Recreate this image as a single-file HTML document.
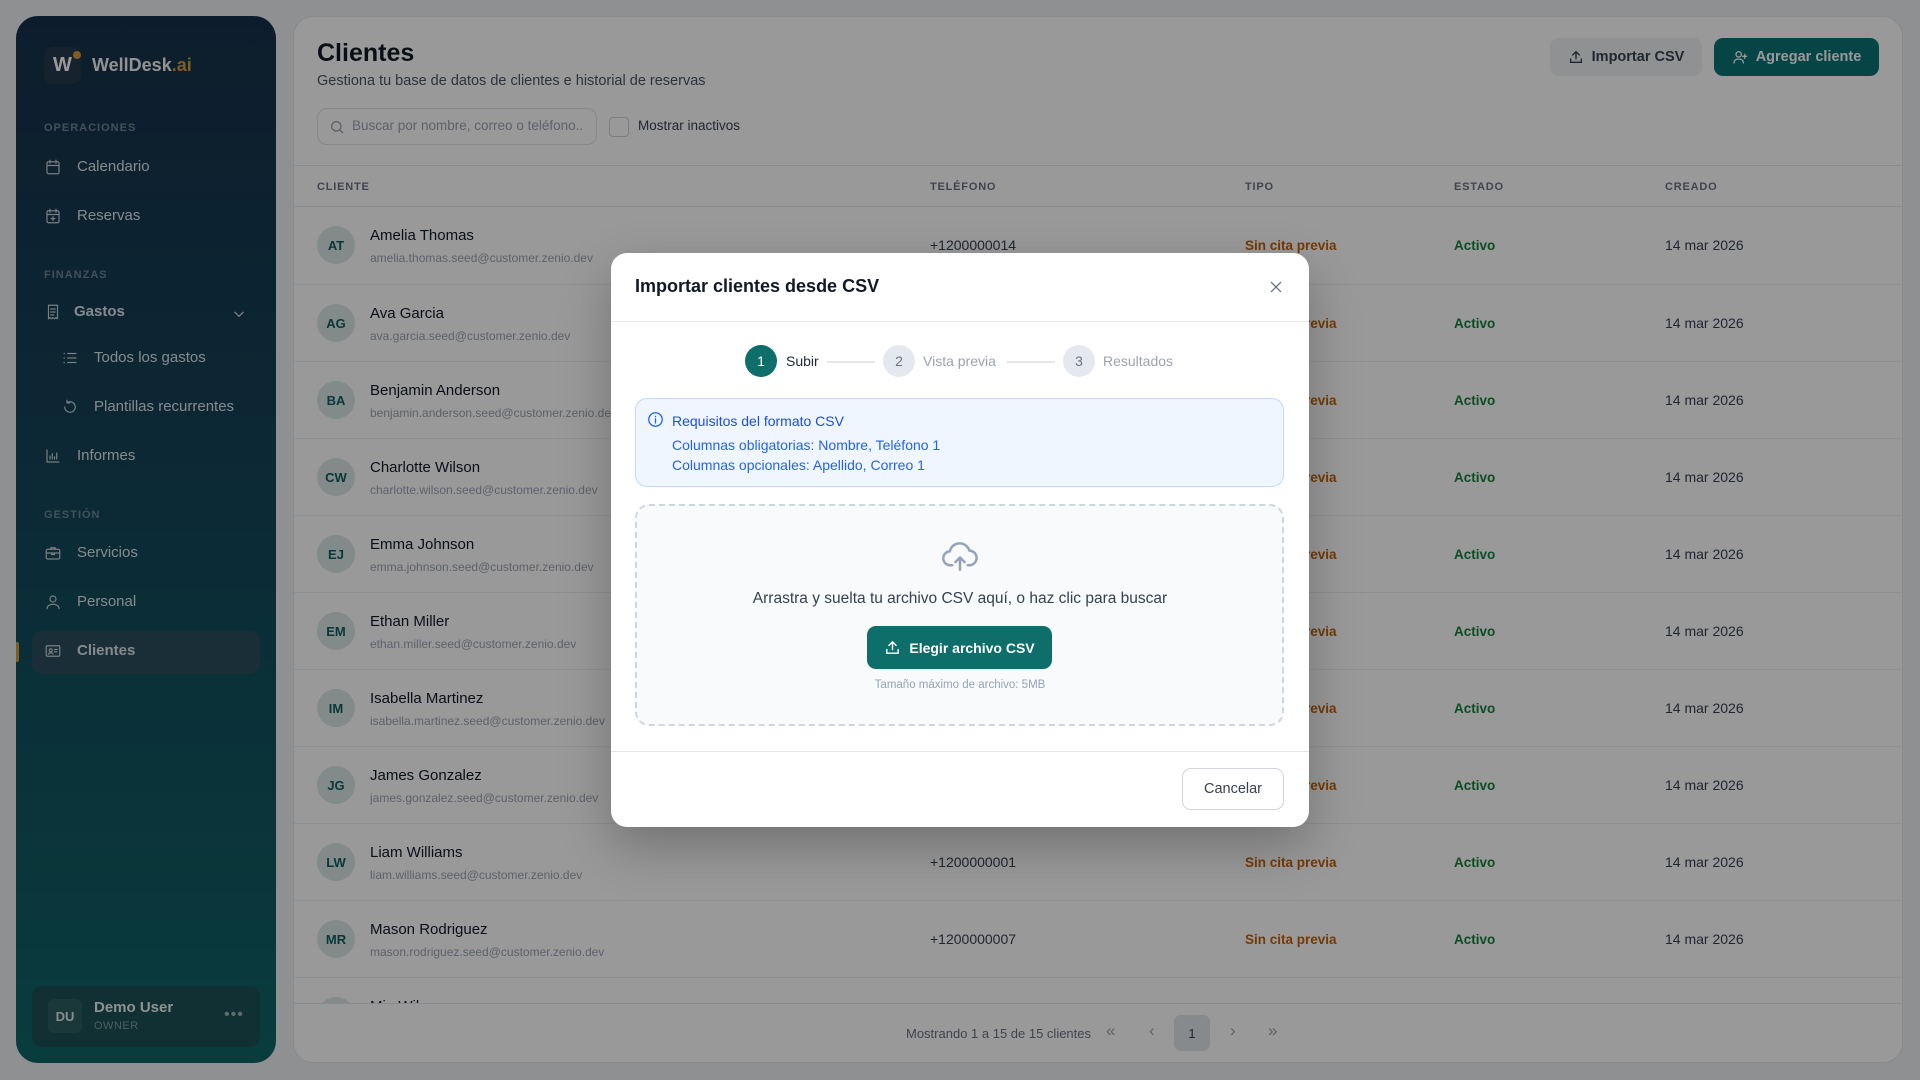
<!DOCTYPE html>
<html><head><meta charset="utf-8">
<style>
*{box-sizing:border-box;margin:0;padding:0}
body{width:1920px;height:1080px;overflow:hidden;background:#eef0f3;font-family:"Liberation Sans",sans-serif;position:relative;color:#111827}
.abs{position:absolute}
.side{left:16px;top:16px;width:260px;height:1047px;border-radius:22px;background:linear-gradient(180deg,#17304a 0%,#13485a 50%,#0f6567 100%)}
.sec{position:absolute;left:44px;font-size:11px;font-weight:bold;letter-spacing:1px;color:#6f8595}
.it{position:absolute;left:44px;font-size:15px;color:#dfe5ea;display:flex;align-items:center;gap:15px;line-height:20px}
.it svg{width:18px;height:18px;stroke:#c9d2d8;fill:none;stroke-width:1.6;stroke-linecap:round;stroke-linejoin:round}
.card{left:293px;top:16px;width:1610px;height:1047px;background:#fff;border:1px solid #e3e6ea;border-radius:20px;overflow:hidden}
.th{position:absolute;top:164px;font-size:11px;font-weight:bold;letter-spacing:.8px;color:#6b7280}
.row{position:absolute;left:0;width:1610px;height:77px;border-top:1px solid #eef0f2}
.av{position:absolute;left:23px;top:19px;width:38px;height:38px;border-radius:50%;background:#dbe7e6;color:#0f5e5c;font-size:13px;font-weight:bold;display:flex;align-items:center;justify-content:center}
.nm{position:absolute;left:76px;top:20px;font-size:15px;color:#111827}
.em{position:absolute;left:76px;top:44px;font-size:12px;color:#9ca3af}
.ph{position:absolute;left:636px;top:30px;font-size:14px;color:#374151}
.tp{position:absolute;left:951px;top:31px;font-size:13.5px;color:#c2620a;font-weight:bold}
.es{position:absolute;left:1160px;top:31px;font-size:13.5px;color:#15803d;font-weight:bold}
.cr{position:absolute;left:1371px;top:30px;font-size:14px;color:#374151}
.ov{left:0;top:0;width:1920px;height:1080px;background:rgba(0,0,0,.4)}
.modal{left:611px;top:253px;width:698px;height:574px;background:#fff;border-radius:16px;box-shadow:0 20px 50px rgba(0,0,0,.25)}
.pg{position:absolute;top:1004px;font-size:17px;color:#9ca3af}
</style></head><body>

<div class="abs side">
  <div class="abs" style="left:28px;top:31px;width:37px;height:37px;border-radius:9px;background:#26394d;color:#fff;font-weight:bold;font-size:20px;display:flex;align-items:center;justify-content:center">W</div>
  <div class="abs" style="left:57px;top:35px;width:8px;height:8px;border-radius:50%;background:#d49a3a"></div>
  <div class="abs" style="left:76px;top:39px;font-size:18px;font-weight:bold;color:#f3f4f6">WellDesk<span style="color:#d49a3a">.ai</span></div>
  <div class="sec" style="top:106px;left:28px">OPERACIONES</div>
  <div class="it" style="top:141px;left:28px"><svg viewBox="0 0 24 24"><rect x="4" y="5" width="16" height="16" rx="2"/><path d="M8 3v4M16 3v4M4 10h16"/></svg>Calendario</div>
  <div class="it" style="top:190px;left:28px"><svg viewBox="0 0 24 24"><rect x="4" y="5" width="16" height="16" rx="2"/><path d="M8 3v4M16 3v4M4 10h16M12 13v5M9.5 15.5h5"/></svg>Reservas</div>
  <div class="sec" style="top:253px;left:28px">FINANZAS</div>
  <div class="it" style="top:286px;left:28px;font-weight:bold;gap:12px"><svg viewBox="0 0 24 24"><path d="M6 3h12v18l-2-1.5-2 1.5-2-1.5-2 1.5-2-1.5L6 21z"/><path d="M9 8h6M9 12h6M9 16h4"/></svg>Gastos</div>
  <svg class="abs" style="left:216px;top:291px" width="14" height="14" viewBox="0 0 24 24" fill="none" stroke="#c9d2d8" stroke-width="2.2" stroke-linecap="round"><path d="M5 9l7 7 7-7"/></svg>
  <div class="it" style="top:332px;left:45px;gap:15px"><svg viewBox="0 0 24 24"><path d="M9 6h11M9 12h11M9 18h11M4 6h.5M4 12h.5M4 18h.5"/></svg>Todos los gastos</div>
  <div class="it" style="top:381px;left:45px"><svg viewBox="0 0 24 24"><path d="M5 12a7 7 0 1 0 3-5.7M8 3v3.5h3.5"/></svg>Plantillas recurrentes</div>
  <div class="it" style="top:430px;left:28px"><svg viewBox="0 0 24 24"><path d="M4 4v16h16M8 16v-4M11 16V9M14 16v-3M17 16V8"/></svg>Informes</div>
  <div class="sec" style="top:493px;left:28px">GESTIÓN</div>
  <div class="it" style="top:527px;left:28px"><svg viewBox="0 0 24 24"><rect x="3" y="7" width="18" height="13" rx="2"/><path d="M9 7V5h6v2M3 12h18M10 12v2h4v-2"/></svg>Servicios</div>
  <div class="it" style="top:576px;left:28px"><svg viewBox="0 0 24 24"><circle cx="12" cy="8" r="4"/><path d="M4 21c0-4 4-6 8-6s8 2 8 6"/></svg>Personal</div>
  <div class="abs" style="left:16px;top:615px;width:228px;height:43px;border-radius:10px;background:#2a4d5a"></div>
  <div class="abs" style="left:0;top:626px;width:3px;height:20px;background:#d49a3a;border-radius:0 2px 2px 0"></div>
  <div class="it" style="top:625px;left:28px;font-weight:bold"><svg viewBox="0 0 24 24"><rect x="3" y="5" width="18" height="14" rx="1.5"/><circle cx="9" cy="11" r="2"/><path d="M6 16c.5-2 5.5-2 6 0M14 10h4M14 13h3"/></svg>Clientes</div>
  <div class="abs" style="left:16px;top:970px;width:228px;height:61px;border-radius:10px;background:#1b5055"></div>
  <div class="abs" style="left:32px;top:983px;width:34px;height:34px;border-radius:6px;background:#2c5d62;color:#e5eaee;font-size:13px;font-weight:bold;display:flex;align-items:center;justify-content:center">DU</div>
  <div class="abs" style="left:78px;top:983px;font-size:15px;font-weight:bold;color:#eef1f3">Demo User</div>
  <div class="abs" style="left:78px;top:1004px;font-size:11px;color:#7f9ea3;letter-spacing:.5px">OWNER</div>
  <div class="abs" style="left:208px;top:990px;font-size:16px;color:#9fb3b6;letter-spacing:1px">•••</div>
</div>

<div class="abs card">
  <div class="abs" style="left:23px;top:22px;font-size:25px;font-weight:bold;color:#111827">Clientes</div>
  <div class="abs" style="left:23px;top:56px;font-size:14.5px;color:#4b5563">Gestiona tu base de datos de clientes e historial de reservas</div>
  <div class="abs" style="left:1256px;top:21px;width:152px;height:38px;border-radius:9px;background:#f1f2f4;font-size:14.5px;font-weight:bold;color:#374151;display:flex;align-items:center;justify-content:center;gap:8px"><svg width="16" height="16" viewBox="0 0 24 24" fill="none" stroke="#374151" stroke-width="2" stroke-linecap="round"><path d="M4 15v5h16v-5M12 15V4M7 9l5-5 5 5"/></svg>Importar CSV</div>
  <div class="abs" style="left:1420px;top:21px;width:165px;height:38px;border-radius:9px;background:#0b7373;font-size:14.5px;font-weight:bold;color:#fff;display:flex;align-items:center;justify-content:center;gap:8px"><svg width="16" height="16" viewBox="0 0 24 24" fill="none" stroke="#fff" stroke-width="2" stroke-linecap="round"><circle cx="10" cy="8" r="4"/><path d="M3 21c0-4 3-6 7-6s7 2 7 6M19 8v6M16 11h6"/></svg>Agregar cliente</div>
  <div class="abs" style="left:23px;top:91px;width:280px;height:37px;border:1px solid #e0e3e7;border-radius:10px"></div>
  <svg class="abs" style="left:35px;top:102px" width="16" height="16" viewBox="0 0 24 24" fill="none" stroke="#9ca3af" stroke-width="2"><circle cx="11" cy="11" r="7"/><path d="M16 16l5 5"/></svg>
  <div class="abs" style="left:58px;top:101px;font-size:13.5px;color:#9ca3af">Buscar por nombre, correo o teléfono..</div>
  <div class="abs" style="left:315px;top:100px;width:20px;height:20px;border:1px solid #cfd3d8;border-radius:4px"></div>
  <div class="abs" style="left:344px;top:101px;font-size:13.5px;color:#374151">Mostrar inactivos</div>
  <div class="abs" style="left:0;top:148px;width:1610px;border-top:1px solid #e5e7eb"></div>
  <div class="th" style="left:23px">CLIENTE</div><div class="th" style="left:636px">TELÉFONO</div><div class="th" style="left:951px">TIPO</div><div class="th" style="left:1160px">ESTADO</div><div class="th" style="left:1371px">CREADO</div>
  <div class="abs" style="left:0;top:189px;width:1610px;border-top:1px solid #e5e7eb"></div>

  <div class="row" style="top:190px;border:0"><div class="av">AT</div><div class="nm">Amelia Thomas</div><div class="em">amelia.thomas.seed@customer.zenio.dev</div><div class="ph">+1200000014</div><div class="tp">Sin cita previa</div><div class="es">Activo</div><div class="cr">14 mar 2026</div></div>
  <div class="row" style="top:267px"><div class="av">AG</div><div class="nm">Ava Garcia</div><div class="em">ava.garcia.seed@customer.zenio.dev</div><div class="ph">+1200000009</div><div class="tp">Sin cita previa</div><div class="es">Activo</div><div class="cr">14 mar 2026</div></div>
  <div class="row" style="top:344px"><div class="av">BA</div><div class="nm">Benjamin Anderson</div><div class="em">benjamin.anderson.seed@customer.zenio.dev</div><div class="ph">+1200000012</div><div class="tp">Sin cita previa</div><div class="es">Activo</div><div class="cr">14 mar 2026</div></div>
  <div class="row" style="top:421px"><div class="av">CW</div><div class="nm">Charlotte Wilson</div><div class="em">charlotte.wilson.seed@customer.zenio.dev</div><div class="ph">+1200000011</div><div class="tp">Sin cita previa</div><div class="es">Activo</div><div class="cr">14 mar 2026</div></div>
  <div class="row" style="top:498px"><div class="av">EJ</div><div class="nm">Emma Johnson</div><div class="em">emma.johnson.seed@customer.zenio.dev</div><div class="ph">+1200000002</div><div class="tp">Sin cita previa</div><div class="es">Activo</div><div class="cr">14 mar 2026</div></div>
  <div class="row" style="top:575px"><div class="av">EM</div><div class="nm">Ethan Miller</div><div class="em">ethan.miller.seed@customer.zenio.dev</div><div class="ph">+1200000005</div><div class="tp">Sin cita previa</div><div class="es">Activo</div><div class="cr">14 mar 2026</div></div>
  <div class="row" style="top:652px"><div class="av">IM</div><div class="nm">Isabella Martinez</div><div class="em">isabella.martinez.seed@customer.zenio.dev</div><div class="ph">+1200000010</div><div class="tp">Sin cita previa</div><div class="es">Activo</div><div class="cr">14 mar 2026</div></div>
  <div class="row" style="top:729px"><div class="av">JG</div><div class="nm">James Gonzalez</div><div class="em">james.gonzalez.seed@customer.zenio.dev</div><div class="ph">+1200000008</div><div class="tp">Sin cita previa</div><div class="es">Activo</div><div class="cr">14 mar 2026</div></div>
  <div class="row" style="top:806px"><div class="av">LW</div><div class="nm">Liam Williams</div><div class="em">liam.williams.seed@customer.zenio.dev</div><div class="ph">+1200000001</div><div class="tp">Sin cita previa</div><div class="es">Activo</div><div class="cr">14 mar 2026</div></div>
  <div class="row" style="top:883px"><div class="av">MR</div><div class="nm">Mason Rodriguez</div><div class="em">mason.rodriguez.seed@customer.zenio.dev</div><div class="ph">+1200000007</div><div class="tp">Sin cita previa</div><div class="es">Activo</div><div class="cr">14 mar 2026</div></div>
  <div class="row" style="top:960px"><div class="av">MW</div><div class="nm">Mia Wilson</div></div>
  <div class="abs" style="left:0;top:986px;width:1610px;height:62px;background:#fff;border-top:1px solid #e5e7eb"></div>
  <div class="abs" style="left:612px;top:1009px;font-size:13px;color:#6b7280">Mostrando 1 a 15 de 15 clientes</div>
  <div class="pg" style="left:812px">«</div>
  <div class="pg" style="left:855px">‹</div>
  <div class="abs" style="left:880px;top:998px;width:36px;height:36px;border-radius:7px;background:#dfe7ea;font-size:13px;color:#374151;display:flex;align-items:center;justify-content:center">1</div>
  <div class="pg" style="left:936px">›</div>
  <div class="pg" style="left:974px">»</div>
</div>

<div class="abs ov"></div>

<div class="abs modal">
  <div class="abs" style="left:24px;top:23px;font-size:18px;font-weight:bold;color:#111827">Importar clientes desde CSV</div>
  <svg class="abs" style="left:657px;top:26px" width="16" height="16" viewBox="0 0 24 24" fill="none" stroke="#6b7280" stroke-width="2" stroke-linecap="round"><path d="M5 5l14 14M19 5L5 19"/></svg>
  <div class="abs" style="left:0;top:68px;width:698px;border-top:1px solid #e5e7eb"></div>
  <div class="abs" style="left:134px;top:92px;width:32px;height:32px;border-radius:50%;background:#0d6e6a;color:#fff;font-size:14px;display:flex;align-items:center;justify-content:center">1</div>
  <div class="abs" style="left:175px;top:100px;font-size:14px;color:#1f2937">Subir</div>
  <div class="abs" style="left:216px;top:108px;width:48px;border-top:2px solid #e5e7eb"></div>
  <div class="abs" style="left:272px;top:92px;width:32px;height:32px;border-radius:50%;background:#e5e9ef;color:#6b7280;font-size:14px;display:flex;align-items:center;justify-content:center">2</div>
  <div class="abs" style="left:312px;top:100px;font-size:14px;color:#9ca3af">Vista previa</div>
  <div class="abs" style="left:396px;top:108px;width:48px;border-top:2px solid #e5e7eb"></div>
  <div class="abs" style="left:452px;top:92px;width:32px;height:32px;border-radius:50%;background:#e5e9ef;color:#6b7280;font-size:14px;display:flex;align-items:center;justify-content:center">3</div>
  <div class="abs" style="left:492px;top:100px;font-size:14px;color:#9ca3af">Resultados</div>
  <div class="abs" style="left:24px;top:145px;width:649px;height:89px;border:1px solid #bfdbfe;background:#eff6ff;border-radius:12px"></div>
  <svg class="abs" style="left:36px;top:158px" width="17" height="17" viewBox="0 0 24 24" fill="none" stroke="#2563eb" stroke-width="1.8" stroke-linecap="round"><circle cx="12" cy="12" r="9.5"/><path d="M12 11v6M12 7.5v.5"/></svg>
  <div class="abs" style="left:61px;top:160px;font-size:14px;color:#1d4ed8">Requisitos del formato CSV</div>
  <div class="abs" style="left:61px;top:184px;font-size:14px;color:#2563eb">Columnas obligatorias: Nombre, Teléfono 1</div>
  <div class="abs" style="left:61px;top:204px;font-size:14px;color:#2563eb">Columnas opcionales: Apellido, Correo 1</div>
  <div class="abs" style="left:24px;top:251px;width:649px;height:222px;border:2px dashed #cfd6df;background:#f8fafc;border-radius:14px"></div>
  <svg class="abs" style="left:330px;top:286px" width="38" height="34" viewBox="0 0 24 22" fill="none" stroke="#94a3b8" stroke-width="1.6" stroke-linecap="round" stroke-linejoin="round"><path d="M7 17H6a4.5 4.5 0 0 1-.6-9A6.5 6.5 0 0 1 18 7.5a4.5 4.5 0 0 1 0 9.5h-1"/><path d="M12 20v-8M9 15l3-3 3 3"/></svg>
  <div class="abs" style="left:0;top:337px;width:698px;text-align:center;font-size:15.5px;color:#374151">Arrastra y suelta tu archivo CSV aquí, o haz clic para buscar</div>
  <div class="abs" style="left:256px;top:373px;width:185px;height:43px;border-radius:9px;background:#0d6e6a;color:#fff;font-size:14px;font-weight:bold;display:flex;align-items:center;justify-content:center;gap:8px"><svg width="17" height="17" viewBox="0 0 24 24" fill="none" stroke="#fff" stroke-width="2" stroke-linecap="round"><path d="M4 15v5h16v-5M12 15V4M7 9l5-5 5 5"/></svg>Elegir archivo CSV</div>
  <div class="abs" style="left:0;top:426px;width:698px;text-align:center;font-size:11.5px;color:#94a3b8">Tamaño máximo de archivo: 5MB</div>
  <div class="abs" style="left:0;top:498px;width:698px;border-top:1px solid #e5e7eb"></div>
  <div class="abs" style="left:571px;top:515px;width:102px;height:42px;border:1px solid #d1d5db;border-radius:9px;font-size:14.5px;color:#374151;display:flex;align-items:center;justify-content:center">Cancelar</div>
</div>
</body></html>
